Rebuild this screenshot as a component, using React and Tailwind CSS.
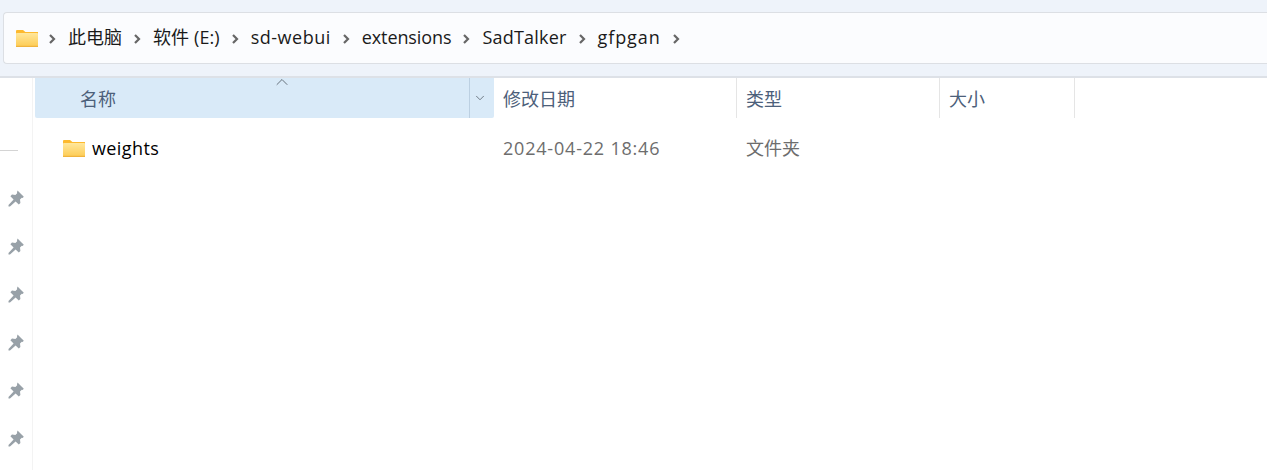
import { ChevronDown, ChevronUp } from 'lucide-react';

const crumbs = [
  { label: '此电脑', track: '' },
  { label: '软件 (E:)', track: 'tracking-[0.1px]' },
  { label: 'sd-webui', track: 'tracking-[0.5px]' },
  { label: 'extensions', track: 'tracking-[-0.1px]' },
  { label: 'SadTalker', track: 'tracking-[0.2px]' },
  { label: 'gfpgan', track: 'tracking-[0.9px]' },
];

const FONT = 'font-["Open_Sans","Noto_Sans_CJK_SC",sans-serif]';

function FolderIcon() {
  return (
    <svg width="22" height="17" viewBox="0 0 22 17" className="shrink-0">
      <defs>
        <linearGradient id="folderBody" x1="0" y1="0" x2="0" y2="1">
          <stop offset="0" stopColor="#ffe79c" />
          <stop offset="1" stopColor="#fdcb52" />
        </linearGradient>
      </defs>
      <path d="M0 1.2C0 .5.5 0 1.2 0h5.4c.4 0 .7.1 1 .4L9.4 2H22v2H0z" fill="#fdb92e" />
      <rect x="0" y="3" width="22" height="14" rx="0.8" fill="url(#folderBody)" />
      <rect x="0" y="15.8" width="22" height="1.2" fill="#f0b33c" />
    </svg>
  );
}

function Pin() {
  return (
    <svg width="16" height="17" viewBox="0 0 16 17" className="shrink-0">
      <path d="M9.500.5L15.800 6.800 14.600 8l-.8-.2L12 9.600l.4 3.400-1.600 1.600-3.200-3.200-5.600 5.100H.5V15l5.100-5.600-3.200-3.200L4 4.600l3.400.4 1.800-1.800L9 2.400z" fill="#98a1a8" />
    </svg>
  );
}

function Chevron() {
  return (
    <svg width="7" height="10" viewBox="0 0 7 10" className="mt-[1px] shrink-0">
      <path d="M1 1l4 4-4 4" fill="none" stroke="#666666" strokeWidth="2.2" />
    </svg>
  );
}

function Crumb({ label, track }) {
  return (
    <>
      <span className={`text-[18px] leading-none pb-[2px] text-[#1a1a1a] whitespace-nowrap ${track}`}>{label}</span>
      <Chevron />
    </>
  );
}

function HeaderCell({ label, width }) {
  return (
    <div className={`flex items-center h-full border-r border-[#e5e5e5] pl-[9px] pt-[2px] ${width}`}>
      <span className="text-[18px] text-[#4c607a]">{label}</span>
    </div>
  );
}

export default function App() {
  return (
    <div className={`w-[1267px] h-[470px] overflow-hidden bg-white flex flex-col ${FONT}`}>
      {/* address bar */}
      <div className="h-[78px] shrink-0 bg-[#eef3fa] border-b-2 border-[#dde1e7] pt-3 pl-[3px]">
        <div className="h-[52px] flex items-center gap-[11px] pl-[12px] bg-[#fbfcfe] border-y border-l border-[#dcdfe4] rounded-l-[4px]">
          <FolderIcon />
          <div className="flex items-center gap-3">
            <Chevron />
            {crumbs.map((c) => (
              <Crumb key={c.label} label={c.label} track={c.track} />
            ))}
          </div>
        </div>
      </div>

      <div className="flex flex-1 min-h-0">
        {/* pinned items strip */}
        <div className="w-[33px] shrink-0 border-r border-[#f3f3f3] flex flex-col">
          <div className="mt-[72px] w-[18px] h-px bg-[#d4d4d4]" />
          <div className="mt-[39px] ml-2 flex flex-col gap-[31px]">
            {[0, 1, 2, 3, 4, 5].map((i) => (
              <Pin key={i} />
            ))}
          </div>
        </div>

        <div className="flex-1 pl-[2px]">
          {/* column headers */}
          <div className="flex h-10 items-center">
            <div className="relative w-[459px] h-full flex bg-[#d9eaf8] rounded-b-[2px]">
              <ChevronUp size={20} strokeWidth={1} color="#4f5963" className="absolute left-[237px] -top-[6px]" />
              <div className="flex-1 border-r border-[#bcd0e2] pl-[45px] pt-[2px] flex items-center">
                <span className="text-[18px] text-[#4c607a]">名称</span>
              </div>
              <div className="w-6 flex items-center pl-[3px]">
                <ChevronDown size={14} strokeWidth={1.3} color="#4f5963" />
              </div>
            </div>
            <HeaderCell label="修改日期" width="w-[243px]" />
            <HeaderCell label="类型" width="w-[203px]" />
            <HeaderCell label="大小" width="w-[135px]" />
          </div>

          {/* file row */}
          <div className="flex items-center h-[22px] mt-[19px]">
            <div className="w-[459px] flex items-center gap-[7px] pl-7">
              <FolderIcon />
              <span className="text-[18px] text-black tracking-[0.4px]">weights</span>
            </div>
            <span className="w-[243px] pl-[9px] text-[18px] text-[#6d6d6d] tracking-[0.8px]">2024-04-22 18:46</span>
            <span className="pl-[9px] text-[18px] text-[#6d6d6d]">文件夹</span>
          </div>
        </div>
      </div>
    </div>
  );
}
